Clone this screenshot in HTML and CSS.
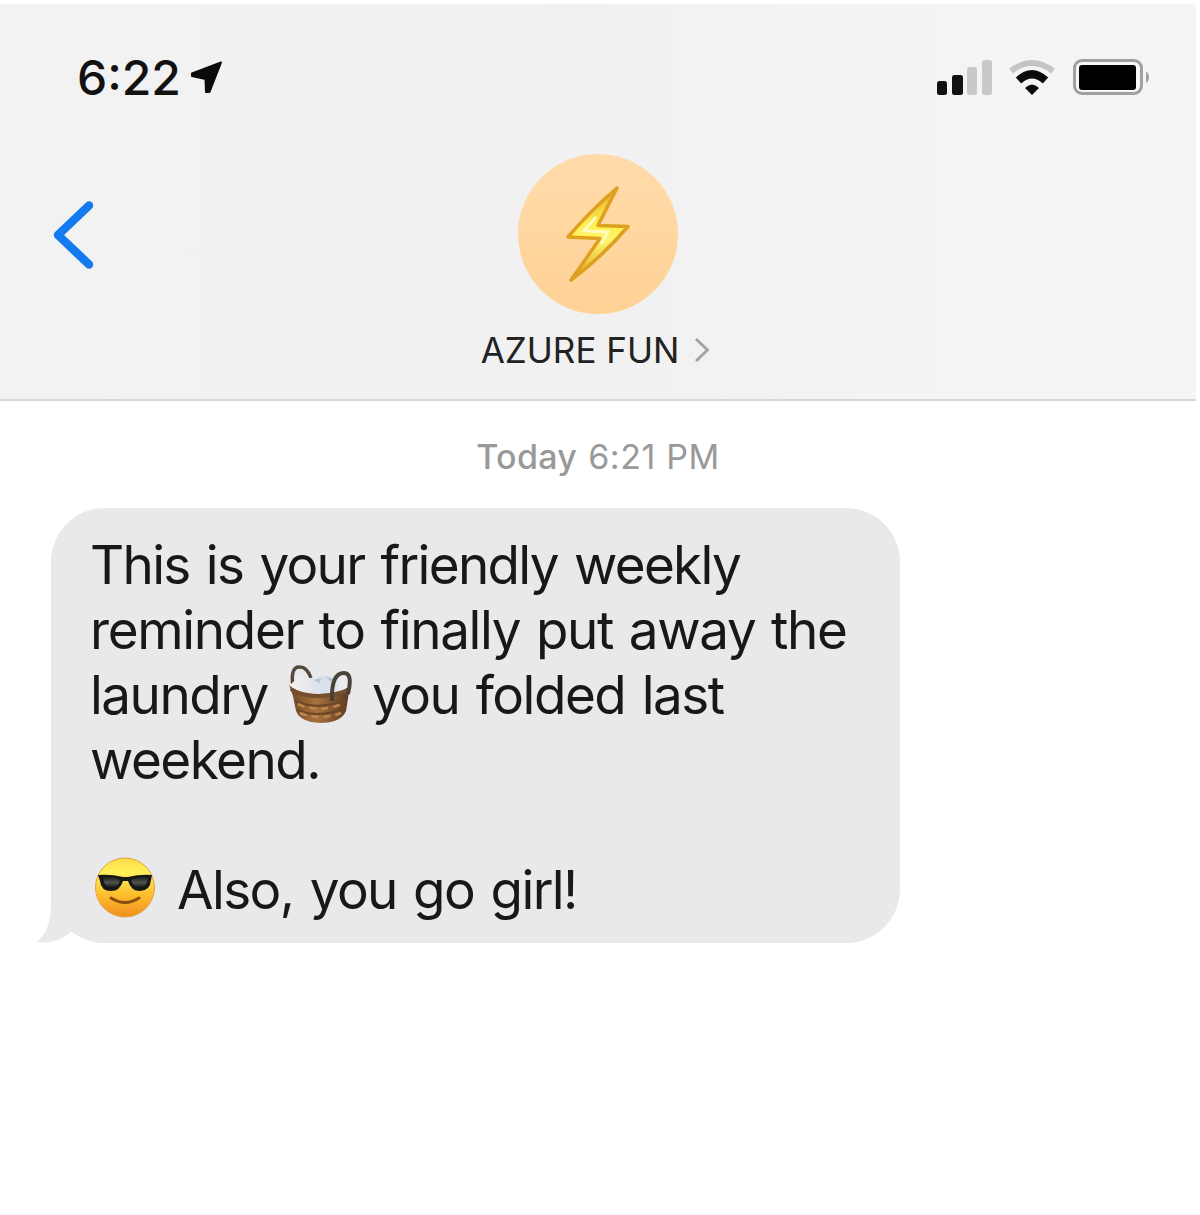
FILE: index.html
```html
<!DOCTYPE html>
<html lang="en">
<head>
<meta charset="utf-8">
<meta name="viewport" content="width=device-width">
<title>Messages</title>
<link rel="stylesheet" href="styles.css">
</head>
<body>
<main class="phone">
  <header class="header">
    <div class="status">
      <div class="status-left">
        <span class="clock">6:22</span>
        <svg class="location" viewBox="0 0 34 34" width="34" height="34"><path d="M31 2.500 19.500 32H16L15.500 19 2 16V13.500Z" fill="#0b0b0b" stroke="#0b0b0b" stroke-width="2" stroke-linejoin="round"/></svg>
      </div>
      <svg class="indicators" viewBox="0 0 214 40" width="214" height="40">
        <g fill="#111">
          <rect x="1" y="22" width="10" height="14" rx="2.5"/>
          <rect x="16" y="16" width="11" height="20" rx="2.5"/>
        </g>
        <g fill="#c9c9c9">
          <rect x="31" y="8" width="10" height="28" rx="2.5"/>
          <rect x="46" y="1" width="10" height="35" rx="2.5"/>
        </g>
        <path d="M75 12Q96 -4 117 12" fill="none" stroke="#c4c4c4" stroke-width="6"/>
        <path d="M82.500 21.500Q96 9 109.500 21.500" fill="none" stroke="#0b0b0b" stroke-width="8"/>
        <path d="M89 29Q96 22 103 29L96 36Z" fill="#0b0b0b"/>
        <rect x="138.500" y="1.500" width="67" height="33" rx="7.500" fill="#f7f7f7" stroke="#a0a0a0" stroke-width="3"/>
        <rect x="143" y="6" width="57" height="25" rx="3" fill="#000"/>
        <path d="M210 12.500Q213 14 213 18T210 24Z" fill="#a0a0a0"/>
      </svg>
    </div>
    <div class="contact">
      <svg class="back" viewBox="0 0 42 70" width="42" height="70"><path d="M37 5.500 6 35 37 64.500" fill="none" stroke="#147af0" stroke-width="8.500" stroke-linecap="round" stroke-linejoin="round"/></svg>
      <div class="person">
        <div class="avatar">
          <svg viewBox="0 0 66 98" width="66" height="98">
            <defs><linearGradient id="bolt" x1="0" y1="0" x2="0" y2="1"><stop offset="0" stop-color="#e5ab2b"/><stop offset=".4" stop-color="#fff04e"/><stop offset=".58" stop-color="#fff56e"/><stop offset="1" stop-color="#dd9c1d"/></linearGradient></defs>
            <path d="M52 3Q24 27 3 52L35 53.500 6 95Q36 73 63 41.500L33 40.500Z" fill="url(#bolt)" stroke="#dda01f" stroke-width="3.500" stroke-linejoin="round"/>
            <path d="M31 32 19 46 43 47 36 59" fill="none" stroke="#fffbc0" stroke-width="3"/>
          </svg>
        </div>
        <div class="name"><span class="name-text">AZURE FUN</span><svg viewBox="0 0 16 26" width="16" height="26"><path d="M2 2 13.500 13 2 24" fill="none" stroke="#a2a2a2" stroke-width="2.800"/></svg></div>
      </div>
    </div>
  </header>
  <section class="thread">
    <div class="stamp"><span class="day">Today</span><span class="time">6:21 PM</span></div>
    <div class="bubble">
      <div class="line l1">This is your friendly weekly</div>
      <div class="line l2">reminder to finally put away the</div>
      <div class="line l3"><span class="laundry">laundry</span><svg class="basket" viewBox="0 0 64 60" width="64" height="60">
        <defs>
          <linearGradient id="wicker" x1="0" y1="0" x2="1" y2="0"><stop offset="0" stop-color="#6f4827"/><stop offset=".45" stop-color="#a9723c"/><stop offset="1" stop-color="#5a3a22"/></linearGradient>
          <linearGradient id="cloth" x1="0" y1="0" x2="1" y2="0"><stop offset="0" stop-color="#f6f3f0"/><stop offset=".6" stop-color="#d7dfea"/><stop offset="1" stop-color="#f1f1f2"/></linearGradient>
        </defs>
        <path d="M5 23Q2 2 12 3Q19 3 23 14" fill="none" stroke="#54493c" stroke-width="3.500"/>
        <path d="M2 21Q12 10 26 15L33 12 42 12 48 15 61 18 58 31 42 35 12 33Z" fill="url(#cloth)"/>
        <path d="M25 16 33 14 32 19ZM38 13 43 18 47 15Z" fill="#b8c5d6"/>
        <path d="M1 21Q8 29 31 30Q52 30 62 22L58 47Q53 59 32 59Q12 58 8 47L5 32Z" fill="url(#wicker)"/>
        <path d="M3 25Q14 33 32 32T60 26" fill="none" stroke="#74502f" stroke-width="4"/>
        <path d="M7 37Q30 47 58 36M9 46Q31 55 57 44" fill="none" stroke="#6b4526" stroke-width="2"/>
        <path d="M10 40Q31 50 56 39M12 49Q32 57 53 49" fill="none" stroke="#bb8650" stroke-width="2.500" stroke-dasharray="7 5"/>
        <path d="M44 37Q43 9 56 9Q65 9 60 30" fill="none" stroke="#484238" stroke-width="4"/>
      </svg><span class="rest">you folded last</span></div>
      <div class="line l4">weekend.</div>
      <div class="line"></div>
      <div class="line l6"><svg class="cool" viewBox="0 0 62 62" width="62" height="62">
        <defs><linearGradient id="face" x1="0" y1="0" x2="0" y2="1"><stop offset="0" stop-color="#fbdc48"/><stop offset=".25" stop-color="#fff05a"/><stop offset=".65" stop-color="#fdba2b"/><stop offset="1" stop-color="#ee8f20"/></linearGradient>
        <linearGradient id="lens" x1="0" y1="0" x2="0" y2="1"><stop offset="0" stop-color="#20231f"/><stop offset=".5" stop-color="#51534d"/><stop offset="1" stop-color="#111"/></linearGradient></defs>
        <circle cx="31" cy="30.500" r="29.500" fill="url(#face)" stroke="#e3a33f" stroke-width="1"/>
        <path d="M4 18Q17 17 29 20H34Q46 17 58 18L57 23Q56 34 46 34Q37 34 34 24H29Q26 34 17 34Q7 34 6 24Z" fill="#171814"/>
        <path d="M9 21Q18 19 26 23Q24 31 17 31Q10 30 9 21ZM37 23Q45 19 54 21Q53 30 46 31Q39 30 37 23Z" fill="url(#lens)"/>
        <path d="M17 41Q31 50 45 41" fill="none" stroke="#8c4d13" stroke-width="3" stroke-linecap="round"/>
      </svg><span class="cheer">Also, you go girl!</span></div>
      <svg class="tail" viewBox="0 0 64 56" width="64" height="56"><path d="M14 0V16Q14 42 0 54Q20 57 35 43Q46 53 64 55V0Z" fill="#e9e9eb"/></svg>
    </div>
  </section>
</main>
</body>
</html>
```
FILE: styles.css
```css
* { box-sizing: border-box; }
body { margin: 0; background: #fff; font-family: Inter, "Liberation Sans", sans-serif; }
svg { display: block; flex: none; }
.phone { width: 1196px; height: 1215px; padding-top: 4px; }
.header { height: 397px; background: linear-gradient(90deg, #f2f2f2 0%, #f1f1f1 50%, #f5f5f5 90%); border-bottom: 2px solid #d6d6d6; }
.status { height: 148px; padding: 50px 46px 0 77px; display: flex; justify-content: space-between; align-items: flex-start; }
.status-left { display: flex; }
.clock { width: 113px; font-size: 48px; line-height: 48px; font-weight: 500; letter-spacing: 0; color: #111; white-space: nowrap; }
.location { margin-top: 6px; }
.indicators { margin-top: 5px; }
.contact { display: grid; grid-template-columns: 1fr 240px 1fr; padding: 2px 0 0; }
.back { margin: 46px 0 0 52px; }
.person { display: flex; flex-direction: column; align-items: center; }
.avatar { width: 160px; height: 160px; border-radius: 50%; background: linear-gradient(#ffdbaa, #ffd296); display: flex; align-items: center; justify-content: center; }
.name { display: flex; align-items: center; gap: 15px; margin-top: 14px; height: 44px; padding-right: 5px; }
.name-text { font-size: 35px; line-height: 44px; color: #222; white-space: nowrap; }
.stamp { display: flex; justify-content: center; gap: 11px; padding-top: 36px; height: 107px; font-size: 34px; line-height: 40px; color: #999; letter-spacing: 0.6px; }
.day { font-weight: 500; letter-spacing: 0.3px; }
.bubble { position: relative; isolation: isolate; width: 849px; height: 435px; margin-left: 51px; padding: 25px 0 0 39px; border-radius: 54px; background: #e9e9eb; color: #181818; }
.line { display: flex; height: 65px; font-size: 53px; line-height: 65px; white-space: nowrap; letter-spacing: -1.5px; word-spacing: 3px; }
.l1 { letter-spacing: -1.7px; }
.l2 { letter-spacing: -1.35px; word-spacing: 2.2px; }
.laundry { width: 198px; }
.rest { margin-left: 20px; }
.basket { margin-top: 1px; }
.cool { margin: -1px 0 0 4px; }
.cheer { margin-left: 21px; letter-spacing: -1.6px; }
.tail { position: absolute; z-index: -1; left: -14px; bottom: -1px; }
```
